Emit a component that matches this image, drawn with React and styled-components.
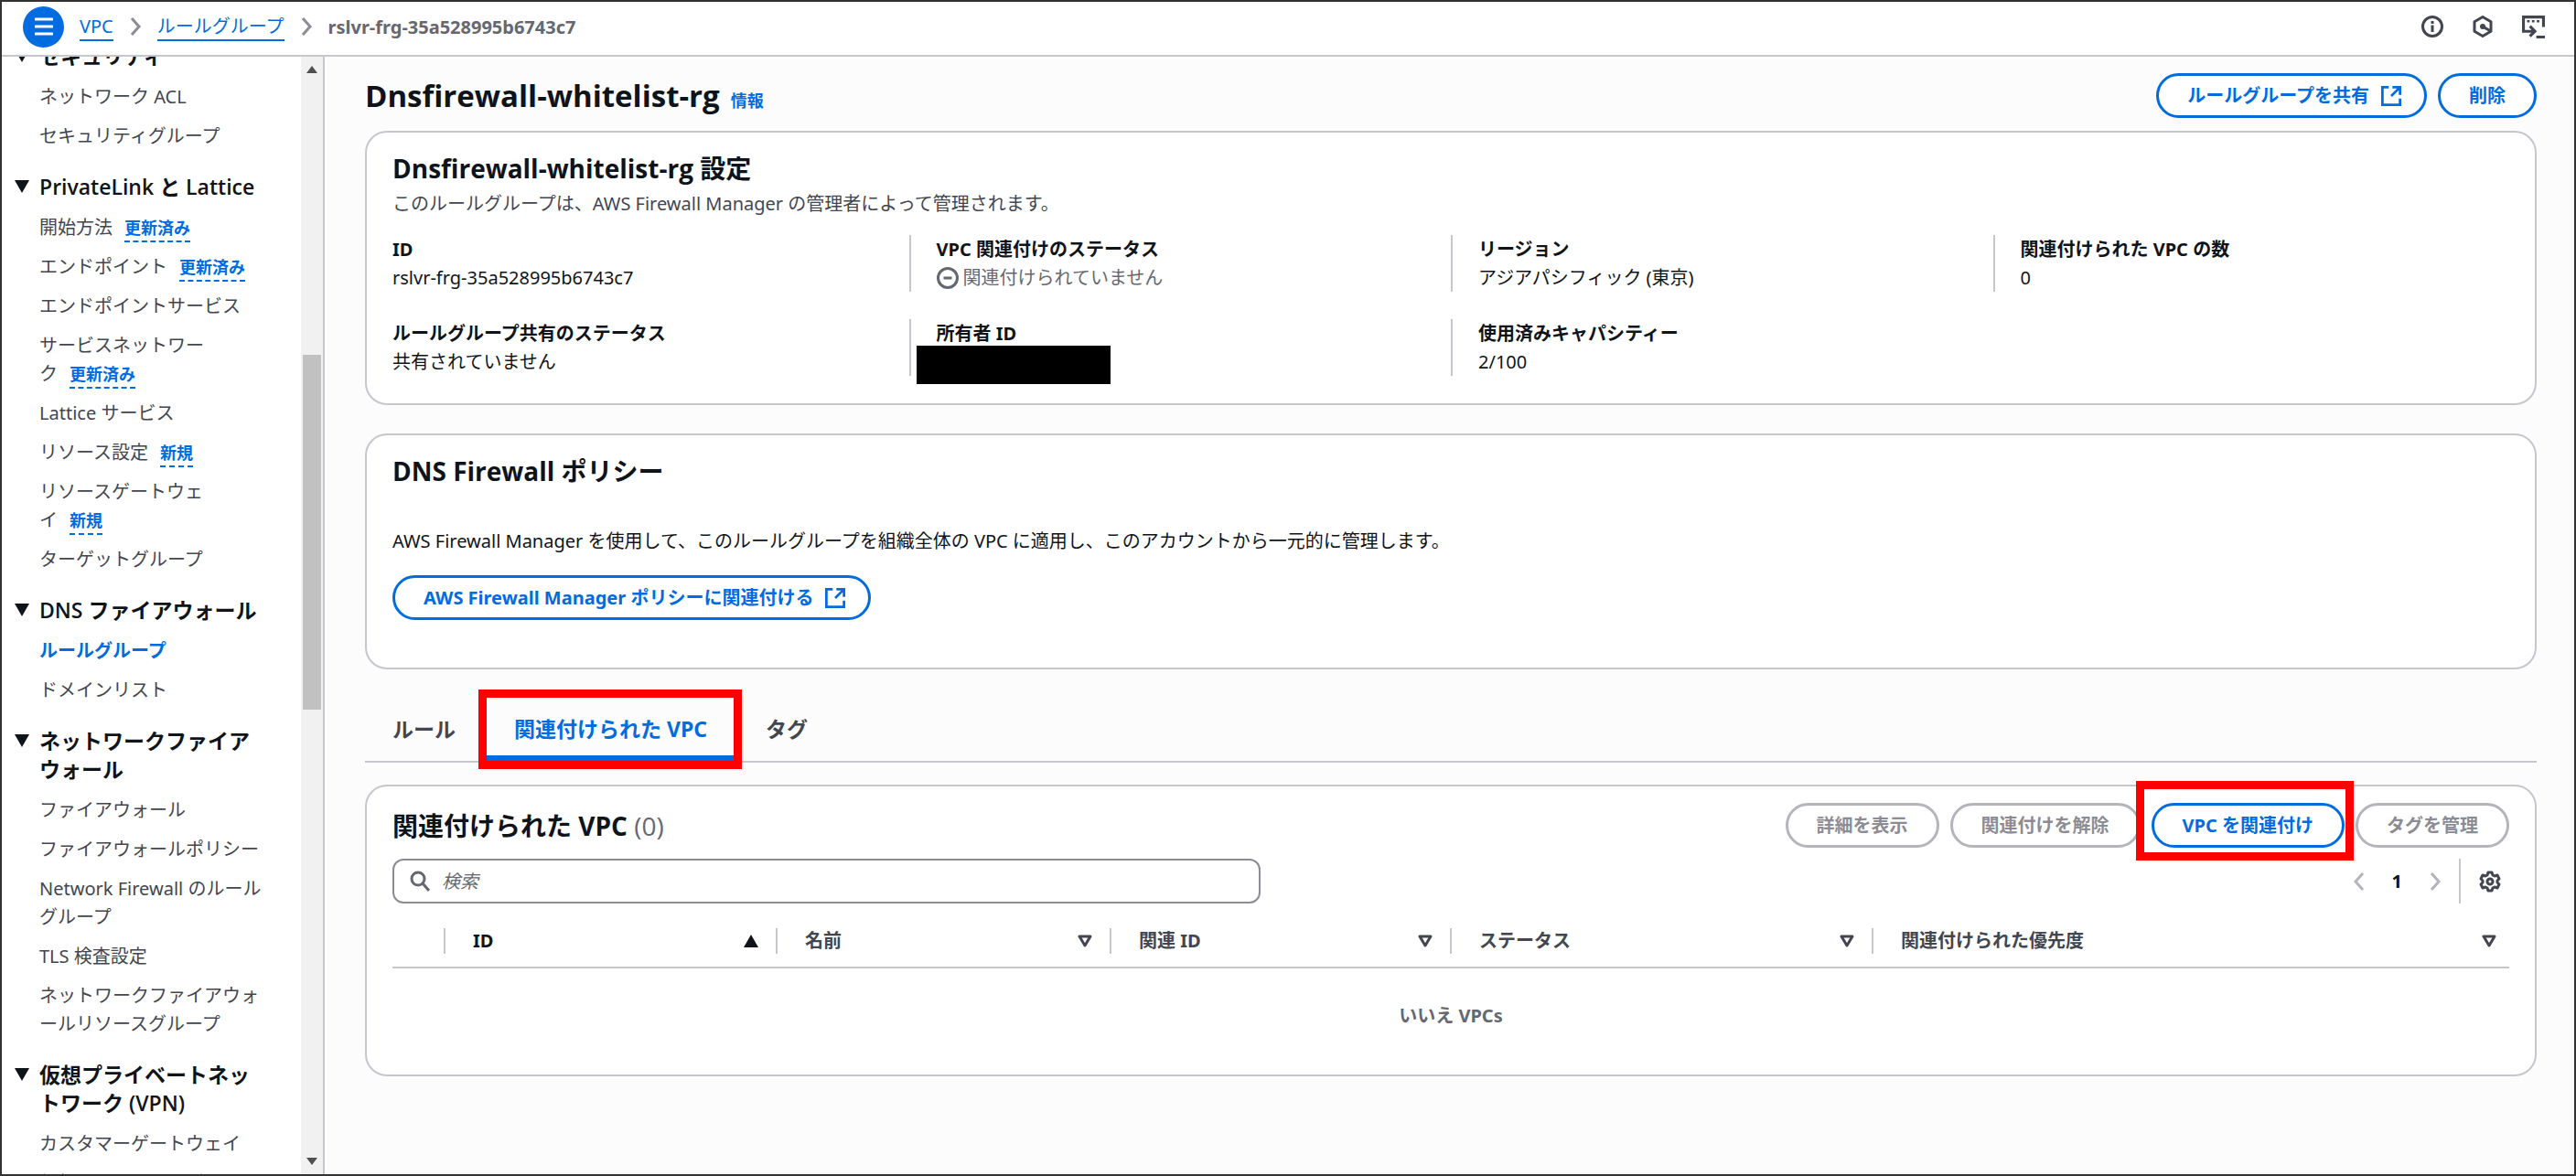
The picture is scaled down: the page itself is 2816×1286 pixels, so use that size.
import React, { useState } from 'react'
import styled, { createGlobalStyle, css } from 'styled-components'

const blue = '#006ce0'
const line = '#c6c6cd'
const ink = '#0f141a'
const body = '#424650'
const muted = '#656871'
const headingFont = '"Open Sans", "Noto Sans CJK JP", sans-serif'

const GlobalStyle = createGlobalStyle`
  * {
    box-sizing: border-box;
  }
  body {
    margin: 0;
    font-family: "Noto Sans", "Noto Sans CJK JP", sans-serif;
    font-size: 20px;
    line-height: 31px;
    color: ${ink};
  }
  button, input {
    font: inherit;
    color: inherit;
  }
`;

const Shell = styled.div`
  display: flex;
  flex-direction: column;
  height: 100vh;
  min-height: 600px;
  border: 2px solid #333;
  background: #fff;
`;

const TopBar = styled.header`
  display: flex;
  align-items: center;
  flex: none;
  height: 60px;
  padding: 0 32px 4px 23px;
  border-bottom: 2px solid ${line};
`;

const MenuButton = styled.button`
  display: flex;
  align-items: center;
  justify-content: center;
  width: 45px;
  height: 45px;
  margin-right: 17px;
  padding: 0;
  border: 0;
  border-radius: 50%;
  background: ${blue};
  color: #fff;
`;

const Crumbs = styled.nav`
  display: flex;
  align-items: center;
  flex: 1;
  gap: 18px;
`;

const Crumb = styled.a`
  color: ${blue};
  line-height: 29px;
  text-decoration: none;
  border-bottom: 2px solid ${blue};
`;

const CrumbArrow = styled.span`
  display: flex;
  color: #8c8c94;
`;

const CurrentCrumb = styled.span`
  color: ${muted};
  font-weight: 700;
`;

const Tools = styled.div`
  display: flex;
  align-items: center;
  gap: 31px;
`;

const IconButton = styled.button`
  display: flex;
  padding: 0;
  border: 0;
  background: none;
  color: ${({ $dim }) => ($dim ? '#b4b4bb' : body)};
`;

const Content = styled.div`
  display: flex;
  flex: 1;
  min-height: 0;
`;

const SidePane = styled.aside`
  display: flex;
  flex: none;
  width: 353px;
  border-right: 2px solid ${line};
`;

const SideScroll = styled.nav`
  flex: 1;
  overflow: hidden;
`;

const SideList = styled.div`
  margin-top: -16px;
  padding-left: 14px;
`;

const GroupTitle = styled.h2`
  display: grid;
  grid-template-columns: 27px 1fr;
  margin: 0 0 13px;
  font-family: ${headingFont};
  font-size: 23px;
  line-height: 31px;
  font-weight: 600;
  white-space: nowrap;

  svg {
    margin-top: 8px;
  }
`;

const GroupList = styled.ul`
  margin: 0 0 25px;
  padding: 0 0 0 27px;
  list-style: none;
`;

const GroupItem = styled.li`
  margin-bottom: 12px;
  white-space: nowrap;
`;

const SideLink = styled.a`
  color: ${({ $active }) => ($active ? blue : body)};
  font-weight: ${({ $active }) => ($active ? 700 : 400)};
  text-decoration: none;
`;

const Badge = styled.a`
  margin-left: 13px;
  padding-bottom: 2px;
  color: ${blue};
  font-size: 18px;
  font-weight: 700;
  line-height: 20px;
  text-decoration: none;
  border-bottom: 2px dashed ${blue};
`;

const Track = styled.div`
  display: flex;
  flex-direction: column;
  align-items: center;
  width: 24px;
  padding: 10px 0;
  background: #f1f1f1;
  color: #505050;
`;

const Rail = styled.div`
  flex: 1;
  width: 20px;
  margin: 8px 0;
  padding-top: 300px;
`;

const Thumb = styled.div`
  height: 388px;
  background: #c1c1c1;
`;

const Main = styled.main`
  flex: 1;
  min-width: 0;
  padding: 18px 41px 0 44px;
  background: #fcfcfd;
  overflow: hidden;
`;

const TitleRow = styled.div`
  display: flex;
  align-items: center;
  justify-content: space-between;
  height: 49px;
  margin-bottom: 14px;
`;

const PageTitle = styled.h1`
  display: flex;
  align-items: baseline;
  gap: 12px;
  margin: 0;
  font-family: ${headingFont};
  font-size: 33px;
  line-height: 44px;
  font-weight: 700;
`;

const InfoLink = styled.a`
  color: ${blue};
  font-size: 18px;
  font-weight: 700;
  line-height: 20px;
  text-decoration: none;
`;

const Actions = styled.div`
  display: flex;
  gap: 12px;
`;

const Button = styled.button`
  display: inline-flex;
  align-items: center;
  gap: 13px;
  height: 49px;
  padding: 0 31px;
  border: 3px solid ${blue};
  border-radius: 25px;
  background: #fff;
  color: ${blue};
  font-weight: 700;
  white-space: nowrap;

  ${({ $icon }) => $icon && css`padding-right: 25px;`}

  &:disabled {
    border-color: #b4b4bb;
    color: #8c8c94;
  }
`;

const Card = styled.section`
  margin-bottom: ${({ $gap }) => $gap || 0}px;
  padding: ${({ $pad }) => $pad};
  border: 2px solid ${line};
  border-radius: 24px;
  background: #fff;
`;

const CardTitle = styled.h2`
  margin: 0;
  font-family: ${headingFont};
  font-size: 28px;
  line-height: 38px;
  font-weight: 700;
`;

const Count = styled.span`
  color: ${muted};
  font-weight: 400;
`;

const Description = styled.p`
  margin: 4px 0 19px;
  color: ${body};
`;

const CardHead = styled.div`
  padding: 0 28px;
`;

const Details = styled.dl`
  display: grid;
  grid-template-columns: repeat(4, 1fr);
  row-gap: 30px;
  margin: 0;
`;

const Detail = styled.div`
  position: relative;
  height: 62px;
  padding-left: 28px;
  border-left: 2px solid ${line};

  &:nth-child(4n + 1) {
    border-left: 0;
  }
`;

const Term = styled.dt`
  font-weight: 700;
`;

const Value = styled.dd`
  display: flex;
  align-items: center;
  gap: 5px;
  margin: 0;
  color: ${({ $muted }) => ($muted ? muted : ink)};
`;

const Redacted = styled.span`
  position: absolute;
  top: 29px;
  left: 6px;
  width: 212px;
  height: 42px;
  background: #000;
`;

const PolicyText = styled.p`
  margin: 42px 0 22px;
`;

const Tabs = styled.div`
  display: flex;
  gap: 4px;
  margin-bottom: 24px;
  border-bottom: 2px solid ${line};
`;

const Tab = styled.button`
  position: relative;
  height: 69px;
  padding: 6px 30px 0;
  border: 0;
  border-bottom: 6px solid ${({ $active }) => ($active ? blue : 'transparent')};
  background: none;
  color: ${({ $active }) => ($active ? blue : body)};
  font-size: 23px;
  font-weight: 700;
`;

const Marker = styled.span`
  position: absolute;
  inset: ${({ $inset }) => $inset};
  border: 9px solid #f00;
  pointer-events: none;
`;

const Marked = styled.div`
  position: relative;
`;

const CardBar = styled.div`
  display: flex;
  align-items: center;
  justify-content: space-between;
  margin-bottom: 12px;
`;

const SearchBox = styled.label`
  display: flex;
  align-items: center;
  gap: 13px;
  width: 41%;
  height: 49px;
  padding: 0 17px;
  border: 2px solid #8c8c94;
  border-radius: 12px;
  color: ${muted};
`;

const SearchInput = styled.input`
  flex: 1;
  min-width: 0;
  padding: 0;
  border: 0;
  outline: 0;
  background: none;

  &::placeholder {
    color: ${muted};
    font-style: italic;
    opacity: 1;
  }
`;

const Pager = styled.div`
  display: flex;
  align-items: center;
  gap: 30px;
  height: 49px;
  padding-right: 9px;
`;

const PageNumber = styled.button`
  padding: 0;
  border: 0;
  background: none;
  font-weight: 700;
`;

const Settings = styled.div`
  display: flex;
  align-items: center;
  height: 49px;
  margin-left: -10px;
  padding-left: 20px;
  border-left: 2px solid ${line};
`;

const Table = styled.table`
  width: 100%;
  table-layout: fixed;
  border-collapse: collapse;
`;

const HeadCell = styled.th`
  width: ${({ $width }) => $width};
  height: 58px;
  padding: 0;
  border-bottom: 2px solid ${line};
  text-align: left;
  color: ${({ $sorted }) => ($sorted ? ink : body)};
`;

const HeadInner = styled.div`
  display: flex;
  align-items: center;
  justify-content: space-between;
  height: 28px;
  padding: 0 ${({ $last }) => ($last ? 14 : 19)}px 0 30px;
  border-right: ${({ $last }) => ($last ? 0 : 2)}px solid ${line};
`;

const EmptyCell = styled.td`
  padding: 36px 0 49px;
  text-align: center;
  color: ${muted};
  font-weight: 700;
`;

const MenuIcon = () => (
  <svg width="22" height="22" viewBox="0 0 22 22" fill="none" stroke="currentColor" strokeWidth="3">
    <path d="M1 3h20M1 11h20M1 19h20" />
  </svg>
)

const Chevron = ({ left }) => (
  <svg width="12" height="20" viewBox="0 0 12 20" fill="none" stroke="currentColor" strokeWidth="3">
    <path d={left ? 'M10 1 2 10l8 9' : 'M2 1l8 9-8 9'} />
  </svg>
)

const InfoIcon = () => (
  <svg width="24" height="24" viewBox="0 0 16 16" fill="none" stroke="currentColor" strokeWidth="2">
    <circle cx="8" cy="8" r="7" />
    <path d="M8 12V7M8 6V4" />
  </svg>
)

const HexIcon = () => (
  <svg width="24" height="24" viewBox="0 0 16 16" fill="none" stroke="currentColor" strokeWidth="2" strokeLinejoin="round">
    <path d="m8 1 6 3.5v7L8 15l-6-3.5v-7z" />
    <circle cx="8" cy="8" r="2" fill="currentColor" stroke="none" />
    <path d="m8 8 5.5 3.2" />
  </svg>
)

const ShellIcon = () => (
  <svg width="25" height="25" viewBox="0 0 16 16" fill="none" stroke="currentColor" strokeWidth="2">
    <path d="M15 8V1H1v10h7M5.5 7.5 9 11l-3.5 3.5M10 15h6" />
    <path d="M3.5 4h9" strokeWidth="1.6" strokeDasharray="1.8 1.6" />
  </svg>
)

const ExternalIcon = () => (
  <svg width="22" height="22" viewBox="0 0 16 16" fill="none" stroke="currentColor" strokeWidth="2">
    <path d="M6 1H1v14h14v-5M9 1h6v6M15 1 8 8" />
  </svg>
)

const StoppedIcon = () => (
  <svg width="24" height="24" viewBox="0 0 16 16" fill="none" stroke="currentColor" strokeWidth="2">
    <circle cx="8" cy="8" r="7" />
    <path d="M5 8h6" />
  </svg>
)

const SearchIcon = () => (
  <svg width="22" height="23" viewBox="0 0 22 23" fill="none" stroke="currentColor" strokeWidth="3">
    <circle cx="9" cy="9" r="7" />
    <path d="m14 14 7 8" />
  </svg>
)

const GearIcon = () => (
  <svg width="24" height="24" viewBox="0 0 24 24" fill="none" stroke="currentColor" strokeWidth="3" strokeLinejoin="round">
    <path d="M10 2h4l1 3 2 1 3-1 2 4-2 2v2l2 2-2 4-3-1-2 1-1 3h-4l-1-3-2-1-3 1-2-4 2-2v-2L2 9l2-4 3 1 2-1z" />
    <circle cx="12" cy="12" r="3" />
  </svg>
)

const Caret = ({ up }) => (
  <svg width="16" height="14" viewBox="0 0 16 14" fill="currentColor">
    <path d={up ? 'M8 0l8 14H0z' : 'M0 0h16L8 14z'} />
  </svg>
)

const SortIcon = () => (
  <svg width="16" height="14" viewBox="0 0 16 14" fill="none" stroke="currentColor" strokeWidth="3" strokeLinejoin="round">
    <path d="M2 2h12L8 12z" />
  </svg>
)

const ScrollArrow = ({ up }) => (
  <svg width="12" height="8" viewBox="0 0 12 8" fill="currentColor">
    <path d={up ? 'M6 0l6 8H0z' : 'M0 0h12L6 8z'} />
  </svg>
)

const groups = [
  {
    title: ['セキュリティ'],
    items: [{ text: ['ネットワーク ACL'] }, { text: ['セキュリティグループ'] }],
  },
  {
    title: ['PrivateLink と Lattice'],
    items: [
      { text: ['開始方法'], badge: '更新済み' },
      { text: ['エンドポイント'], badge: '更新済み' },
      { text: ['エンドポイントサービス'] },
      { text: ['サービスネットワー', 'ク'], badge: '更新済み' },
      { text: ['Lattice サービス'] },
      { text: ['リソース設定'], badge: '新規' },
      { text: ['リソースゲートウェ', 'イ'], badge: '新規' },
      { text: ['ターゲットグループ'] },
    ],
  },
  {
    title: ['DNS ファイアウォール'],
    items: [{ text: ['ルールグループ'], active: true }, { text: ['ドメインリスト'] }],
  },
  {
    title: ['ネットワークファイア', 'ウォール'],
    items: [
      { text: ['ファイアウォール'] },
      { text: ['ファイアウォールポリシー'] },
      { text: ['Network Firewall のルール', 'グループ'] },
      { text: ['TLS 検査設定'] },
      { text: ['ネットワークファイアウォ', 'ールリソースグループ'] },
    ],
  },
  {
    title: ['仮想プライベートネッ', 'トワーク (VPN)'],
    items: [{ text: ['カスタマーゲートウェイ'] }, { text: ['仮想プライベートゲートウ'] }],
  },
]

const columns = [
  { label: 'ID', width: '363px', sorted: true },
  { label: '名前', width: '365px' },
  { label: '関連 ID', width: '372px' },
  { label: 'ステータス', width: '461px' },
  { label: '関連付けられた優先度', width: 'auto' },
]

const tabs = ['ルール', '関連付けられた VPC', 'タグ']

const Lines = ({ text }) => text.map((part, i) => (
  <React.Fragment key={part}>
    {i > 0 && <br />}
    {part}
  </React.Fragment>
))

const Sidebar = () => (
  <SidePane>
    <SideScroll aria-label="VPC">
      <SideList>
        {groups.map((group) => (
          <React.Fragment key={group.title[0]}>
            <GroupTitle>
              <Caret />
              <span><Lines text={group.title} /></span>
            </GroupTitle>
            <GroupList>
              {group.items.map((item) => (
                <GroupItem key={item.text[0]}>
                  <SideLink href="#" $active={item.active}><Lines text={item.text} /></SideLink>
                  {item.badge && <Badge href="#">{item.badge}</Badge>}
                </GroupItem>
              ))}
            </GroupList>
          </React.Fragment>
        ))}
      </SideList>
    </SideScroll>
    <Track>
      <ScrollArrow up />
      <Rail><Thumb /></Rail>
      <ScrollArrow />
    </Track>
  </SidePane>
)

const App = () => {
  const [tab, setTab] = useState(tabs[1]);
  const [query, setQuery] = useState("");

  return (
    <Shell>
      <GlobalStyle />
      <TopBar>
        <MenuButton aria-label="メニュー"><MenuIcon /></MenuButton>
        <Crumbs>
          <Crumb href="#">VPC</Crumb>
          <CrumbArrow><Chevron /></CrumbArrow>
          <Crumb href="#">ルールグループ</Crumb>
          <CrumbArrow><Chevron /></CrumbArrow>
          <CurrentCrumb>rslvr-frg-35a528995b6743c7</CurrentCrumb>
        </Crumbs>
        <Tools>
          <IconButton aria-label="情報"><InfoIcon /></IconButton>
          <IconButton aria-label="診断"><HexIcon /></IconButton>
          <IconButton aria-label="CloudShell"><ShellIcon /></IconButton>
        </Tools>
      </TopBar>
      <Content>
        <Sidebar />
        <Main>
          <TitleRow>
            <PageTitle>
              Dnsfirewall-whitelist-rg
              <InfoLink href="#">情報</InfoLink>
            </PageTitle>
            <Actions>
              <Button $icon>ルールグループを共有<ExternalIcon /></Button>
              <Button>削除</Button>
            </Actions>
          </TitleRow>

          <Card $pad="20px 0 30px" $gap={31}>
            <CardHead>
              <CardTitle>Dnsfirewall-whitelist-rg 設定</CardTitle>
              <Description>このルールグループは、AWS Firewall Manager の管理者によって管理されます。</Description>
            </CardHead>
            <Details>
              <Detail>
                <Term>ID</Term>
                <Value>rslvr-frg-35a528995b6743c7</Value>
              </Detail>
              <Detail>
                <Term>VPC 関連付けのステータス</Term>
                <Value $muted><StoppedIcon />関連付けられていません</Value>
              </Detail>
              <Detail>
                <Term>リージョン</Term>
                <Value>アジアパシフィック (東京)</Value>
              </Detail>
              <Detail>
                <Term>関連付けられた VPC の数</Term>
                <Value>0</Value>
              </Detail>
              <Detail>
                <Term>ルールグループ共有のステータス</Term>
                <Value>共有されていません</Value>
              </Detail>
              <Detail>
                <Term>所有者 ID</Term>
                <Value><Redacted /></Value>
              </Detail>
              <Detail>
                <Term>使用済みキャパシティー</Term>
                <Value>2/100</Value>
              </Detail>
            </Details>
          </Card>

          <Card $pad="20px 28px 52px" $gap={31}>
            <CardTitle>DNS Firewall ポリシー</CardTitle>
            <PolicyText>
              AWS Firewall Manager を使用して、このルールグループを組織全体の VPC に適用し、このアカウントから一元的に管理します。
            </PolicyText>
            <Button $icon>AWS Firewall Manager ポリシーに関連付ける<ExternalIcon /></Button>
          </Card>

          <Tabs role="tablist">
            {tabs.map((name) => (
              <Tab
                key={name}
                role="tab"
                aria-selected={tab === name}
                $active={tab === name}
                onClick={() => setTab(name)}
              >
                {name}
                {name === tabs[1] && <Marker $inset="-9px -8px -15px -9px" />}
              </Tab>
            ))}
          </Tabs>

          <Card $pad="18px 28px 0">
            <CardBar>
              <CardTitle>関連付けられた VPC <Count>(0)</Count></CardTitle>
              <Actions>
                <Button disabled>詳細を表示</Button>
                <Button disabled>関連付けを解除</Button>
                <Marked>
                  <Button>VPC を関連付け</Button>
                  <Marker $inset="-24px -10px -14px -17px" />
                </Marked>
                <Button disabled>タグを管理</Button>
              </Actions>
            </CardBar>
            <CardBar>
              <SearchBox>
                <SearchIcon />
                <SearchInput
                  type="search"
                  aria-label="検索"
                  placeholder="検索"
                  value={query}
                  onChange={(e) => setQuery(e.target.value)}
                />
              </SearchBox>
              <Pager>
                <IconButton $dim aria-label="前のページ"><Chevron left /></IconButton>
                <PageNumber>1</PageNumber>
                <IconButton $dim aria-label="次のページ"><Chevron /></IconButton>
                <Settings>
                  <IconButton aria-label="設定"><GearIcon /></IconButton>
                </Settings>
              </Pager>
            </CardBar>
            <Table>
              <thead>
                <tr>
                  <HeadCell $width="58px"><HeadInner /></HeadCell>
                  {columns.map((col, i) => (
                    <HeadCell key={col.label} $width={col.width} $sorted={col.sorted}>
                      <HeadInner $last={i === columns.length - 1}>
                        {col.label}
                        {col.sorted ? <Caret up /> : <SortIcon />}
                      </HeadInner>
                    </HeadCell>
                  ))}
                </tr>
              </thead>
              <tbody>
                <tr>
                  <EmptyCell colSpan={6}>いいえ VPCs</EmptyCell>
                </tr>
              </tbody>
            </Table>
          </Card>
        </Main>
      </Content>
    </Shell>
  )
}

export default App
